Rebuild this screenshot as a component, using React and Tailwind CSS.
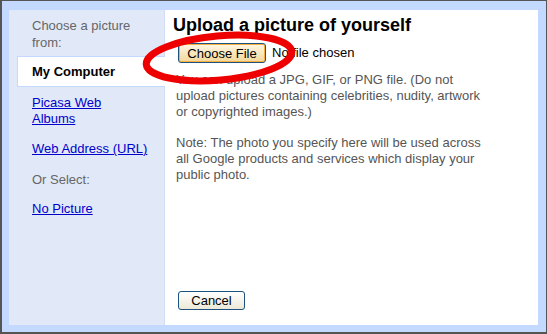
export default function App() {
  return (
    <div
      className="relative w-[547px] h-[334px] bg-[#c3d9ff] border-[#555] border-l-2 border-t border-r border-b-2 pl-[7px] pt-[9px] pr-[8px] pb-[7px] overflow-hidden"
      style={{ fontFamily: '"Liberation Sans", Arial, sans-serif' }}
    >
      <div className="flex h-full">
        {/* Sidebar */}
        <div className="w-[156px] h-full bg-[#e1e9f8] border-r border-[#d0ddf5] text-[13px] leading-[16px]">
          <div className="pl-[23px] pt-[7px] text-[#666] leading-[17px]">
            Choose a picture
            <br />
            from:
          </div>
          <div className="ml-[8px] mt-[5px] h-[31px] bg-white border-y border-l border-[#c3d9ff] pl-[14px] flex items-center font-bold text-black -mr-px">
            My Computer
          </div>
          <div className="pl-[23px] pt-[8px] flex flex-col">
            <a href="#" className="text-[#0000cc] underline">
              Picasa Web
              <br />
              Albums
            </a>
            <a href="#" className="text-[#0000cc] underline mt-[14px]">
              Web Address (URL)
            </a>
            <span className="text-[#666] mt-[15px]">Or Select:</span>
            <a href="#" className="text-[#0000cc] underline mt-[13px]">
              No Picture
            </a>
          </div>
        </div>

        {/* Main */}
        <div className="flex-1 h-full bg-white flex flex-col pl-[8px]">
          <h1 className="text-[18px] font-bold text-black mt-[4px] leading-[22px]">
            Upload a picture of yourself
          </h1>
          <div className="flex items-center mt-[7px] pl-[5px]">
            <button className="w-[88px] h-[20px] rounded-[3px] border border-[#1c5180] bg-gradient-to-b from-[#fff8e4] to-[#f3d79a] shadow-[inset_0_0_0_1px_#f5b040] text-[13px] text-black leading-none">
              Choose File
            </button>
            <span className="ml-[6px] text-[13px] text-black">No file chosen</span>
          </div>
          <p className="mt-[9px] pl-[3px] text-[13px] leading-[16px] text-[#555]">
            You can upload a JPG, GIF, or PNG file. (Do not
            <br />
            upload pictures containing celebrities, nudity, artwork
            <br />
            or copyrighted images.)
          </p>
          <p className="mt-[15px] pl-[3px] text-[13px] leading-[16px] text-[#555]">
            Note: The photo you specify here will be used across
            <br />
            all Google products and services which display your
            <br />
            public photo.
          </p>
          <div className="mt-auto mb-[13px] pl-[5px]">
            <button className="w-[67px] h-[19px] rounded-[3px] border border-[#1c5180] bg-gradient-to-b from-white to-[#ece9d8] text-[13px] text-black leading-none">
              Cancel
            </button>
          </div>
        </div>
      </div>

      {/* red annotation ellipse */}
      <svg
        className="absolute left-0 top-0 pointer-events-none"
        width="547"
        height="334"
      >
        <ellipse
          cx="217"
          cy="57"
          rx="73"
          ry="22"
          transform="rotate(-5 217 57)"
          fill="none"
          stroke="#ee0000"
          strokeWidth="7"
        />
      </svg>
    </div>
  );
}
